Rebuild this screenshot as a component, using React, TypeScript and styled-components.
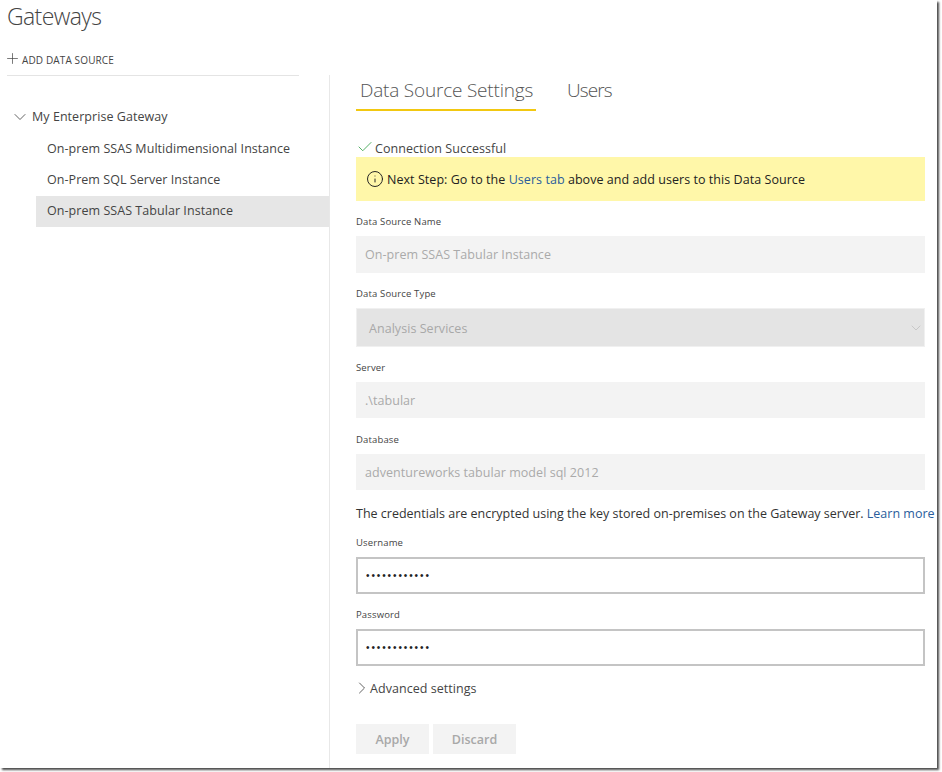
import React from 'react';
import styled, { createGlobalStyle } from 'styled-components';
import { Check, ChevronDown, ChevronRight, Info, Plus } from 'lucide-react';

const GlobalStyle = createGlobalStyle`
  html, body {
    margin: 0;
    padding: 0;
    width: 942px;
    height: 772px;
    overflow: hidden;
    background: #fff;
    font-family: 'Open Sans', 'Liberation Sans', sans-serif;
    color: #333;
  }
  * { box-sizing: border-box; }
`;

const Frame = styled.div`
  width: 937px;
  height: 768px;
  background: #fff;
  box-shadow: 2px 2px 2px rgba(0, 0, 0, 0.7);
  display: flex;
  flex-direction: column;
`;

const Header = styled.header`
  padding: 0 0 0 7px;
  height: 75px;
  display: flex;
  flex-direction: column;
`;

const Title = styled.h1`
  margin: 1px 0 0;
  font-size: 23px;
  line-height: 30px;
  font-weight: 300;
  color: #444;
  letter-spacing: -0.6px;
`;

const AddButton = styled.div`
  margin-top: 19px;
  display: flex;
  align-items: center;
  height: 20px;
  font-size: 10px;
  color: #444;
  letter-spacing: 0.13px;
  text-transform: uppercase;
  & > svg {
    margin: -3px 1px 0 -3px;
  }
`;

const Body = styled.div`
  flex: 1;
  display: flex;
  min-height: 0;
`;

const Sidebar = styled.nav`
  width: 330px;
  flex: none;
  border-right: 1px solid #e8e8e8;
  position: relative;
  padding-top: 26px;
  &:before {
    content: '';
    position: absolute;
    top: 0;
    left: 7px;
    width: 292px;
    height: 1px;
    background: #e4e4e4;
  }
`;

const GatewayRow = styled.div`
  display: flex;
  align-items: center;
  height: 33px;
  padding: 0 0 2px 10px;
  gap: 2px;
  font-size: 12.5px;
  letter-spacing: 0.05px;
  color: #444;
`;

const SourceRow = styled.div<{ selected?: boolean }>`
  margin-left: 36px;
  height: 31px;
  display: flex;
  align-items: center;
  padding: 0 0 2px 11px;
  font-size: 12.5px;
  letter-spacing: 0.05px;
  color: #444;
  background: ${({ selected }) => (selected ? '#e6e6e6' : 'transparent')};
`;

const Main = styled.main`
  flex: 1;
  padding: 0 0 0 26px;
  margin-top: -75px;
  min-width: 0;
`;

const Form = styled.div`
  width: 569px;
`;

const TabList = styled.div`
  margin-top: 75px;
  display: flex;
  height: 36px;
`;

const Tab = styled.div<{ selected?: boolean }>`
  width: ${({ selected }) => (selected ? '180px' : 'auto')};
  margin-right: 31px;
  padding-left: ${({ selected }) => (selected ? '4px' : '0')};
  font-size: 19px;
  line-height: 31px;
  font-weight: 300;
  letter-spacing: ${({ selected }) => (selected ? '-0.2px' : '-0.9px')};
  color: #555;
  border-bottom: ${({ selected }) => (selected ? '2px solid #f2c811' : 'none')};
`;

const Status = styled.div`
  margin-top: 28px;
  display: flex;
  align-items: center;
  gap: 1px;
  height: 18px;
  font-size: 12.5px;
  letter-spacing: 0.05px;
  color: #444;
  & > svg {
    margin-top: -3px;
  }
`;

const Banner = styled.div`
  height: 44px;
  background: #fff7a9;
  display: flex;
  align-items: center;
  gap: 3px;
  padding-left: 10px;
  font-size: 12.5px;
  letter-spacing: 0.05px;
  color: #222;
`;

const Link = styled.a`
  color: #2a5d9c;
`;

const Field = styled.div`
  display: flex;
  flex-direction: column;
`;

const Label = styled.label`
  height: 15px;
  font-size: 9.5px;
  line-height: 15px;
  letter-spacing: 0.15px;
  color: #444;
`;

const ReadOnlyInput = styled.input<{ height: number }>`
  display: block;
  width: 100%;
  height: ${({ height }) => height}px;
  border: none;
  outline: none;
  background: #f3f3f3;
  padding: 0 9px;
  font: inherit;
  font-size: 12.5px;
  letter-spacing: 0.05px;
  color: #aaa;
`;

const SelectWrap = styled.div`
  position: relative;
  height: 39px;
  border: 1px solid #f0f0f0;
  background: #e4e4e4;
  display: flex;
  align-items: center;
  padding: 1px 0 0 12px;
  font-size: 12.5px;
  letter-spacing: 0.05px;
  color: #a8a8a8;
`;

const SelectArrow = styled(ChevronDown)`
  position: absolute;
  right: 0;
  top: 11px;
  color: #c0c0c0;
`;

const SecretInput = styled.input`
  display: block;
  width: 100%;
  height: 37px;
  border: 2px solid #c4c4c4;
  outline: none;
  background: #fff;
  padding: 0 8px;
  font-family: 'Liberation Sans', sans-serif;
  font-size: 10px;
  letter-spacing: 1.9px;
  color: #222;
`;

const Credentials = styled.div`
  height: 18px;
  width: 590px;
  font-size: 12.5px;
  line-height: 18px;
  letter-spacing: 0;
  white-space: nowrap;
  color: #333;
`;

const Advanced = styled.div`
  margin-top: 13px;
  height: 18px;
  display: flex;
  align-items: center;
  font-size: 12.5px;
  letter-spacing: 0.05px;
  color: #444;
  & > svg {
    margin: -1px -2px 0 -4px;
  }
`;

const Actions = styled.div`
  margin-top: 27px;
  display: flex;
  gap: 4px;
`;

const ActionButton = styled.button<{ width: number }>`
  width: ${({ width }) => width}px;
  height: 30px;
  border: none;
  padding: 0;
  background: #f3f3f3;
  font: inherit;
  font-size: 12.5px;
  font-weight: 600;
  letter-spacing: 0;
  color: #a8a8a8;
`;

const Gap = styled.div<{ size: number }>`
  height: ${({ size }) => size}px;
`;

const sources = [
  'On-prem SSAS Multidimensional Instance',
  'On-Prem SQL Server Instance',
  'On-prem SSAS Tabular Instance'
];

export default function App() {
  return (
    <>
      <GlobalStyle />
      <Frame>
        <Header>
          <Title>Gateways</Title>
          <AddButton>
            <Plus size={17} strokeWidth={1} />
            Add data source
          </AddButton>
        </Header>
        <Body>
          <Sidebar>
            <GatewayRow>
              <ChevronDown size={20} strokeWidth={1} />
              My Enterprise Gateway
            </GatewayRow>
            {sources.map((name, i) => (
              <SourceRow key={name} selected={i === 2}>
                {name}
              </SourceRow>
            ))}
          </Sidebar>
          <Main>
            <Form>
              <TabList>
                <Tab selected>Data Source Settings</Tab>
                <Tab>Users</Tab>
              </TabList>
              <Status>
                <Check size={18} strokeWidth={1.3} color="#4fae62" />
                Connection Successful
              </Status>
              <Banner>
                <Info size={18} strokeWidth={1.3} color="#222" />
                <span>
                  Next Step: Go to the <Link>Users tab</Link> above and add users
                  to this Data Source
                </span>
              </Banner>
              <Gap size={13} />
              <Field>
                <Label>Data Source Name</Label>
                <Gap size={7} />
                <ReadOnlyInput height={37} readOnly value="On-prem SSAS Tabular Instance" />
              </Field>
              <Gap size={13} />
              <Field>
                <Label>Data Source Type</Label>
                <Gap size={7} />
                <SelectWrap>
                  Analysis Services
                  <SelectArrow size={16} strokeWidth={1.2} />
                </SelectWrap>
              </Field>
              <Gap size={13} />
              <Field>
                <Label>Server</Label>
                <Gap size={7} />
                <ReadOnlyInput height={36} readOnly value=".\tabular" />
              </Field>
              <Gap size={14} />
              <Field>
                <Label>Database</Label>
                <Gap size={7} />
                <ReadOnlyInput height={36} readOnly value="adventureworks tabular model sql 2012" />
              </Field>
              <Gap size={15} />
              <Credentials>
                The credentials are encrypted using the key stored on-premises on
                the Gateway server. <Link>Learn more</Link>
              </Credentials>
              <Gap size={12} />
              <Field>
                <Label>Username</Label>
                <Gap size={7} />
                <SecretInput type="password" readOnly value="............" />
              </Field>
              <Gap size={13} />
              <Field>
                <Label>Password</Label>
                <Gap size={7} />
                <SecretInput type="password" readOnly value="............" />
              </Field>
              <Advanced>
                <ChevronRight size={20} strokeWidth={1} />
                Advanced settings
              </Advanced>
              <Actions>
                <ActionButton width={73}>Apply</ActionButton>
                <ActionButton width={83}>Discard</ActionButton>
              </Actions>
            </Form>
          </Main>
        </Body>
      </Frame>
    </>
  );
}
